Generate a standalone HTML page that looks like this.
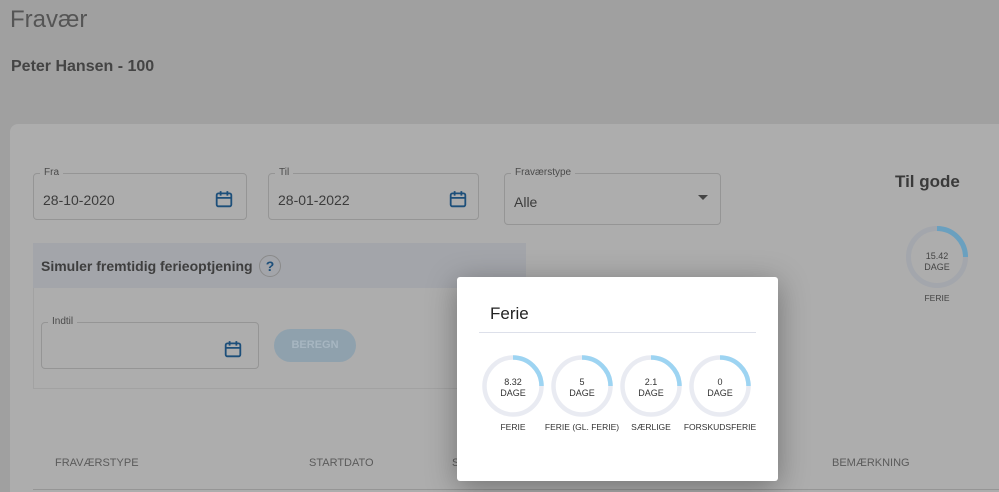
<!DOCTYPE html><html style="overflow:hidden;height:492px"><head><style>
body{margin:0;width:999px;height:492px;background:#a0a0a0;font-family:"Liberation Sans",sans-serif;position:relative;overflow:hidden}
.a{position:absolute}
.fld{position:absolute;border:1px solid #959595;border-radius:4px;box-sizing:border-box}
.fld .l{position:absolute;top:-7px;left:6px;background:#adadad;padding:0 4px;font-size:10px;color:#4a4a4a}
.fld .v{position:absolute;left:9px;top:18px;font-size:14px;color:#3c3c3c}
.cal{position:absolute;width:18px;height:18px}
.th{position:absolute;top:457px;font-size:11px;color:#5a5a5a}
.lbl{position:absolute;font-size:8.5px;color:#333;text-align:center;width:80px}
</style></head><body>
<div class="a" style="left:10px;top:6px;font-size:24px;color:#555;font-weight:300">Fravær</div>
<div class="a" style="left:11px;top:58px;font-size:16px;color:#444;font-weight:bold">Peter Hansen - 100</div>
<div class="a" style="left:10px;top:124px;width:989px;height:368px;background:#adadad;border-radius:8px 0 0 0"></div>
<div class="fld" style="left:33px;top:173px;width:214px;height:47px"><span class="l">Fra</span><span class="v">28-10-2020</span>
<svg class="cal" style="left:181px;top:16px" viewBox="0 0 16 16"><rect x="1.5" y="3" width="13" height="11.5" rx="1.5" fill="none" stroke="#1d4f7a" stroke-width="1.6"/><path d="M1.5 7h13M5 1v4M11 1v4" stroke="#1d4f7a" stroke-width="1.6"/></svg></div>
<div class="fld" style="left:268px;top:173px;width:211px;height:47px"><span class="l">Til</span><span class="v">28-01-2022</span>
<svg class="cal" style="left:180px;top:16px" viewBox="0 0 16 16"><rect x="1.5" y="3" width="13" height="11.5" rx="1.5" fill="none" stroke="#1d4f7a" stroke-width="1.6"/><path d="M1.5 7h13M5 1v4M11 1v4" stroke="#1d4f7a" stroke-width="1.6"/></svg></div>
<div class="fld" style="left:504px;top:173px;width:217px;height:52px"><span class="l">Fraværstype</span><span class="v" style="top:20px">Alle</span>
<div class="a" style="left:193px;top:21px;border:5px solid transparent;border-top:5px solid #444"></div></div>
<div class="a" style="left:895px;top:172px;font-size:17px;font-weight:bold;color:#3a3a3a">Til gode</div>
<svg class="a" style="left:905px;top:225px" width="64" height="64"><circle cx="32" cy="32" r="28.5" fill="none" stroke="#a3a6ac" stroke-width="5"/><path d="M32 3.5A28.5 28.5 0 0 1 60.5 32" fill="none" stroke="#6aa0bf" stroke-width="5"/><text x="32" y="34" font-size="9" text-anchor="middle" fill="#444" font-family="Liberation Sans">15.42</text><text x="32" y="45" font-size="9" text-anchor="middle" fill="#444" font-family="Liberation Sans">DAGE</text></svg>
<div class="lbl" style="left:897px;top:293px;color:#444">FERIE</div>
<div class="a" style="left:33px;top:243px;width:493px;height:146px;border:1px solid #a2a2a2;box-sizing:border-box"></div>
<div class="a" style="left:33px;top:243px;width:493px;height:45px;background:#a3a5aa"></div>
<div class="a" style="left:41px;top:258px;font-size:14px;font-weight:bold;color:#3e3e3e">Simuler fremtidig ferieoptjening</div>
<div class="a" style="left:259px;top:255px;width:22px;height:22px;border:1px solid #8a8a8a;border-radius:50%;box-sizing:border-box;text-align:center;font-size:14px;line-height:20px;font-weight:bold;color:#1d4f7a">?</div>
<div class="fld" style="left:41px;top:322px;width:218px;height:47px"><span class="l">Indtil</span>
<svg class="cal" style="left:182px;top:17px" viewBox="0 0 16 16"><rect x="1.5" y="3" width="13" height="11.5" rx="1.5" fill="none" stroke="#1d4f7a" stroke-width="1.6"/><path d="M1.5 7h13M5 1v4M11 1v4" stroke="#1d4f7a" stroke-width="1.6"/></svg></div>
<div class="a" style="left:274px;top:329px;width:82px;height:33px;border-radius:17px;background:#8fa1ad;color:#a7b6c1;font-size:11px;font-weight:bold;text-align:center;line-height:33px">BEREGN</div>
<div class="th" style="left:55px">FRAVÆRSTYPE</div>
<div class="th" style="left:309px">STARTDATO</div>
<div class="th" style="left:452px">S</div>
<div class="th" style="left:832px">BEMÆRKNING</div>
<div class="a" style="left:33px;top:489px;width:966px;height:1px;background:#959595"></div>
<div class="a" style="left:457px;top:277px;width:321px;height:204px;background:#fff;border-radius:3px;box-shadow:0 6px 30px rgba(0,0,0,.35)">
<div class="a" style="left:33px;top:27px;font-size:17px;color:#222">Ferie</div>
<div class="a" style="left:22px;top:55px;width:277px;height:1px;background:#dde0ea"></div>
<svg class="a" style="left:24px;top:77px" width="280" height="64" font-family="Liberation Sans" font-size="9" fill="#333" text-anchor="middle">
<g id="c"><circle cx="32" cy="32" r="28.5" fill="none" stroke="#e9ebf2" stroke-width="4.5"/><path d="M32 3.5A28.5 28.5 0 0 1 60.5 32" fill="none" stroke="#9dd4f2" stroke-width="4.5"/></g>
<use href="#c" x="69"/><use href="#c" x="138"/><use href="#c" x="207"/>
<text x="32" y="31">8.32</text><text x="32" y="42">DAGE</text>
<text x="101" y="31">5</text><text x="101" y="42">DAGE</text>
<text x="170" y="31">2.1</text><text x="170" y="42">DAGE</text>
<text x="239" y="31">0</text><text x="239" y="42">DAGE</text>
</svg>
<div class="lbl" style="left:16px;top:145px">FERIE</div>
<div class="lbl" style="left:85px;top:145px">FERIE (GL. FERIE)</div>
<div class="lbl" style="left:154px;top:145px">SÆRLIGE</div>
<div class="lbl" style="left:223px;top:145px">FORSKUDSFERIE</div>
</div>
</body></html>
